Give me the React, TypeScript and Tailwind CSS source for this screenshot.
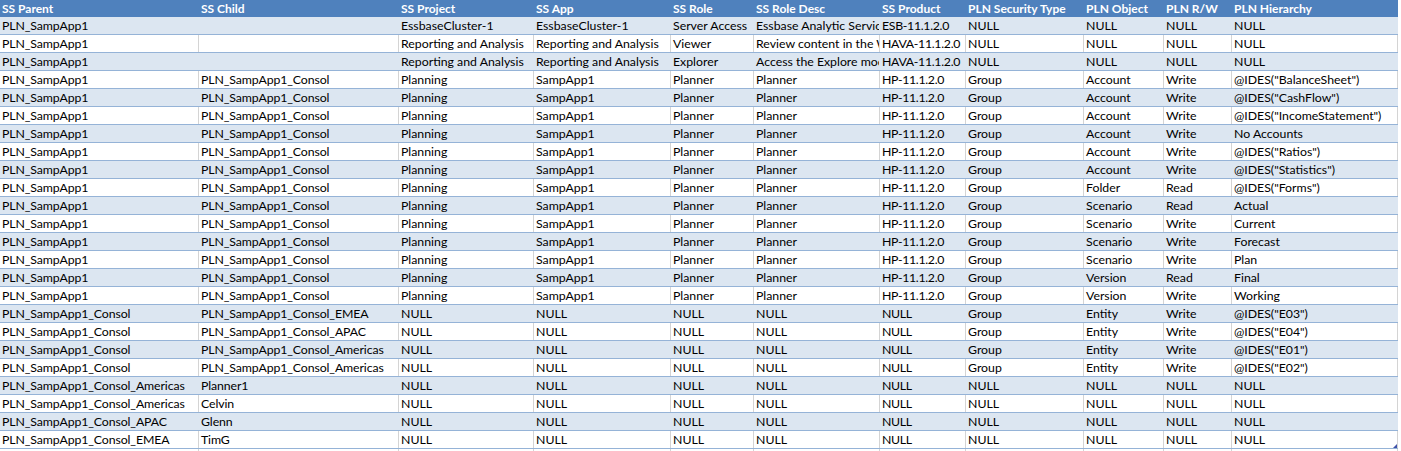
import React from "react";

const columns = [
  "SS Parent",
  "SS Child",
  "SS Project",
  "SS App",
  "SS Role",
  "SS Role Desc",
  "SS Product",
  "PLN Security Type",
  "PLN Object",
  "PLN R/W",
  "PLN Hierarchy",
];

const grid =
  "grid grid-cols-[199px_200px_135px_137px_83px_126px_86px_118px_80px_68px_166px] w-[1398px]";

const planner = (obj: string, rw: string, hierarchy: string) => [
  "PLN_SampApp1",
  "PLN_SampApp1_Consol",
  "Planning",
  "SampApp1",
  "Planner",
  "Planner",
  "HP-11.1.2.0",
  "Group",
  obj,
  rw,
  hierarchy,
];

const entity = (child: string, hierarchy: string) => [
  "PLN_SampApp1_Consol",
  child,
  "NULL",
  "NULL",
  "NULL",
  "NULL",
  "NULL",
  "Group",
  "Entity",
  "Write",
  hierarchy,
];

const user = (parent: string, child: string) => [
  parent,
  child,
  ...Array(9).fill("NULL"),
];

const rows: string[][] = [
  ["PLN_SampApp1", "", "EssbaseCluster-1", "EssbaseCluster-1", "Server Access", "Essbase Analytic Services", "ESB-11.1.2.0", "NULL", "NULL", "NULL", "NULL"],
  ["PLN_SampApp1", "", "Reporting and Analysis", "Reporting and Analysis", "Viewer", "Review content in the Workspace", "HAVA-11.1.2.0", "NULL", "NULL", "NULL", "NULL"],
  ["PLN_SampApp1", "", "Reporting and Analysis", "Reporting and Analysis", "Explorer", "Access the Explore module", "HAVA-11.1.2.0", "NULL", "NULL", "NULL", "NULL"],
  planner("Account", "Write", '@IDES("BalanceSheet")'),
  planner("Account", "Write", '@IDES("CashFlow")'),
  planner("Account", "Write", '@IDES("IncomeStatement")'),
  planner("Account", "Write", "No Accounts"),
  planner("Account", "Write", '@IDES("Ratios")'),
  planner("Account", "Write", '@IDES("Statistics")'),
  planner("Folder", "Read", '@IDES("Forms")'),
  planner("Scenario", "Read", "Actual"),
  planner("Scenario", "Write", "Current"),
  planner("Scenario", "Write", "Forecast"),
  planner("Scenario", "Write", "Plan"),
  planner("Version", "Read", "Final"),
  planner("Version", "Write", "Working"),
  entity("PLN_SampApp1_Consol_EMEA", '@IDES("E03")'),
  entity("PLN_SampApp1_Consol_APAC", '@IDES("E04")'),
  entity("PLN_SampApp1_Consol_Americas", '@IDES("E01")'),
  entity("PLN_SampApp1_Consol_Americas", '@IDES("E02")'),
  user("PLN_SampApp1_Consol_Americas", "Planner1"),
  user("PLN_SampApp1_Consol_Americas", "Celvin"),
  user("PLN_SampApp1_Consol_APAC", "Glenn"),
  user("PLN_SampApp1_Consol_EMEA", "TimG"),
];

export default function App() {
  return (
    <div className="relative w-[1401px] h-[451px] overflow-hidden bg-white font-['Lato',sans-serif] text-[12.3px] leading-[17px] text-black">
      <div className={`${grid} h-[17px] bg-[#4f81bd] text-[12px] leading-[17px] font-bold text-white`}>
        {columns.map((name) => (
          <div key={name} className="pl-[2px] overflow-hidden whitespace-nowrap">
            {name}
          </div>
        ))}
      </div>
      {rows.map((row, i) => (
        <div
          key={i}
          className={`${grid} h-[18px] border-b border-[#95b3d7] ${i % 2 === 0 ? "bg-[#dce6f1]" : "bg-white"}`}
        >
          {row.map((value, j) => (
            <div
              key={j}
              className={`h-[17px] pl-[2px] overflow-hidden whitespace-nowrap border-r ${j === 6 ? "tracking-[-0.3px]" : ""} ${j < 2 ? "tracking-[-0.1px]" : ""} ${i % 2 === 0 ? "border-transparent" : "border-[#d4d4d4]"}`}
            >
              {value}
            </div>
          ))}
        </div>
      ))}
      <div className={`${grid} h-[2px]`}>
        {columns.map((name) => (
          <div key={name} className="border-r border-[#d4d4d4]" />
        ))}
      </div>
      <div className="absolute left-[1393px] top-[444px] w-[4px] h-[4px] bg-[#3f51a8] [clip-path:polygon(100%_0,100%_100%,0_100%)]" />
    </div>
  );
}
